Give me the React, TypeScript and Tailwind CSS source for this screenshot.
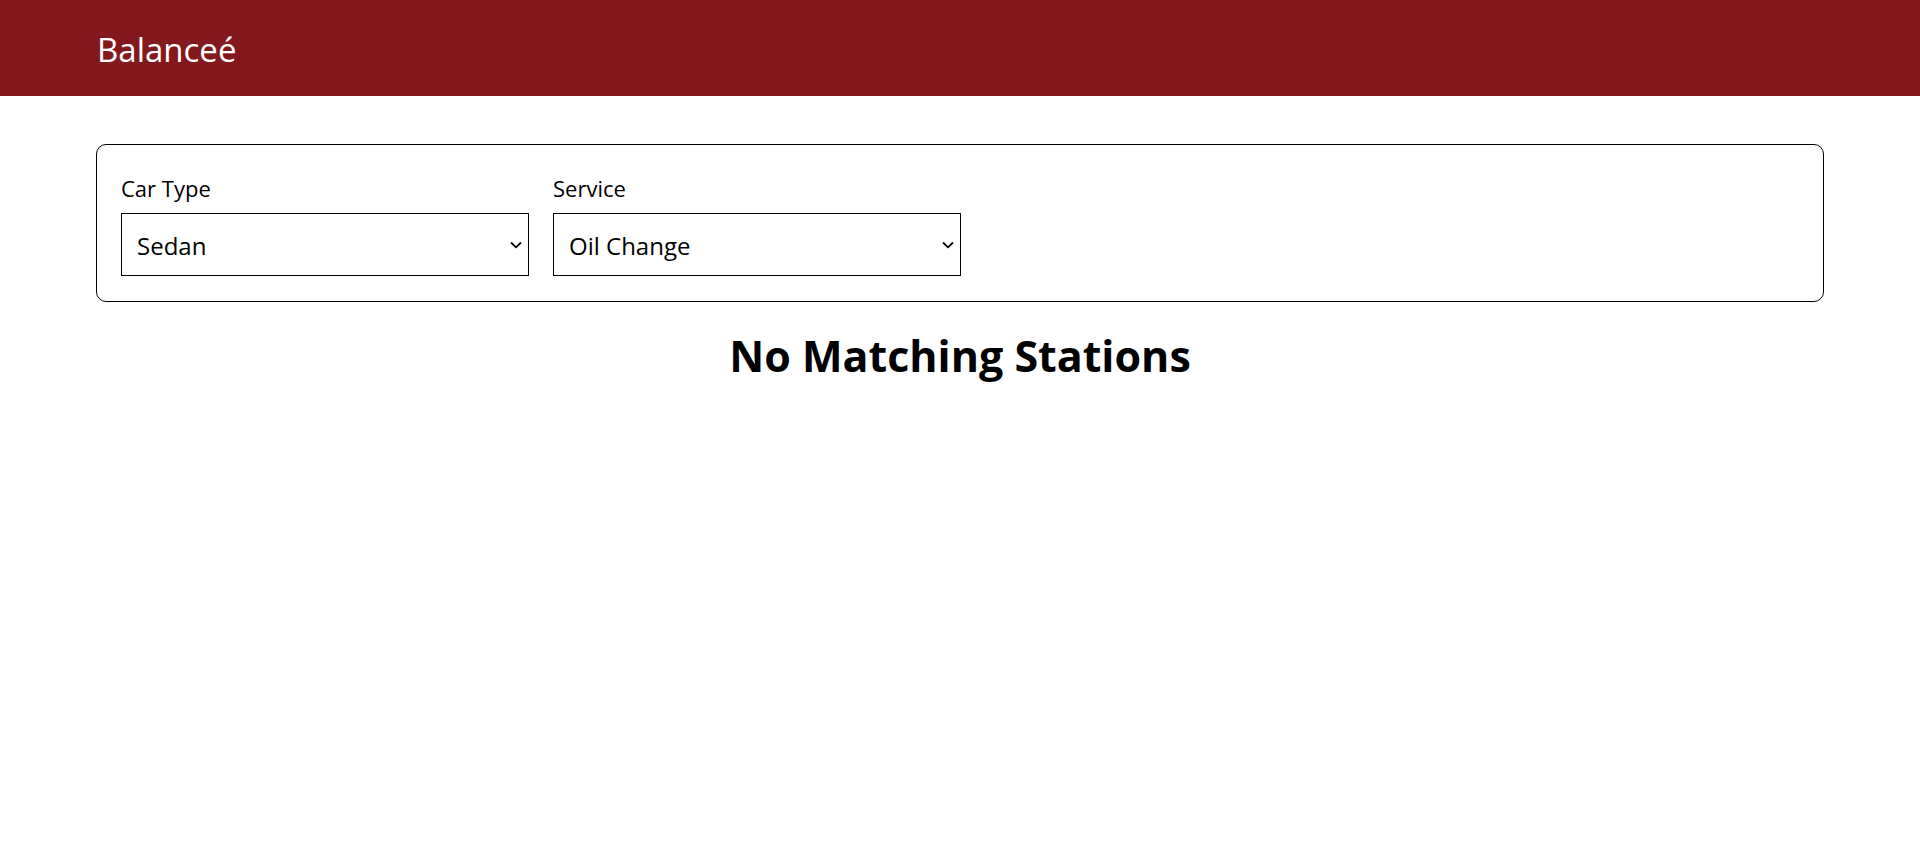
import React from "react";

function Chevron() {
  return (
    <svg width="12" height="8" viewBox="0 0 12 8" className="absolute right-[7px] top-[28px] pointer-events-none">
      <path d="M1 1.5 L6 6.3 L11 1.5" fill="none" stroke="#000" strokeWidth="1.8" />
    </svg>
  );
}

function Field({ label, value, options }: { label: string; value: string; options: string[] }) {
  return (
    <div className="flex flex-col w-[408px]">
      <label className="text-[22px] leading-[30px] mt-[4px] mb-[10px] text-black">{label}</label>
      <div className="relative">
        <select
          defaultValue={value}
          className="appearance-none w-full h-[63px] border border-black bg-white pl-[15px] pr-[30px] pt-[2px] text-[24px] text-black outline-none rounded-none"
        >
          {options.map((o) => (
            <option key={o}>{o}</option>
          ))}
        </select>
        <Chevron />
      </div>
    </div>
  );
}

export default function App() {
  return (
    <div className="min-h-[850px] bg-white" style={{ fontFamily: '"Open Sans", "Noto Sans", sans-serif' }}>
      <header className="h-[96px] bg-[#83191c] flex items-center px-[97px]">
        <span className="text-white text-[33px] leading-none mt-[2px]">Balanceé</span>
      </header>
      <main className="px-[96px] pt-[48px]">
        <div className="border border-black rounded-[10px] px-[24px] pt-[24px] pb-[25px] flex gap-[24px]">
          <Field label="Car Type" value="Sedan" options={["Sedan", "SUV", "Truck", "Coupe"]} />
          <Field label="Service" value="Oil Change" options={["Oil Change", "Tire Rotation", "Car Wash"]} />
        </div>
        <h1 className="text-center font-bold text-[43px] leading-[60px] mt-[24px] text-black">No Matching Stations</h1>
      </main>
    </div>
  );
}
